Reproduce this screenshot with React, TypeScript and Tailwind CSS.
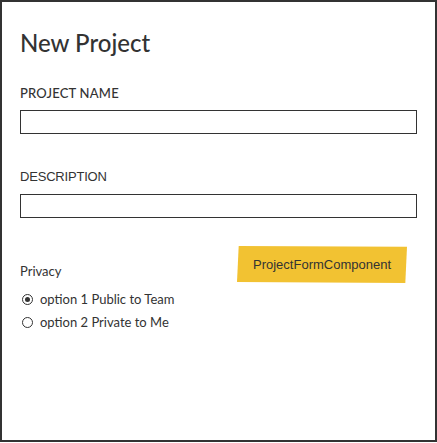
export default function App() {
  const font = { fontFamily: 'Lato, "Noto Sans", sans-serif' }
  return (
    <div className="w-[437px] h-[443px] bg-white">
      <div
        className="relative w-[437px] h-[442px] border-2 border-[#333] px-[18px] text-[#333]"
        style={font}
      >
        <h1 className="mt-[26px] text-[24px] leading-[30px] font-medium">New Project</h1>

        <label className="block mt-[27px] text-[13px] leading-[16px] font-medium tracking-[0.2px]">
          PROJECT NAME
        </label>
        <div className="mt-[9px] h-[24px] w-[397px] border-[1.5px] border-[#333]" />

        <label
          className="block mt-[35px] text-[13px] leading-[16px] tracking-[-0.2px]"
          style={{ fontFamily: '"Liberation Sans", Arial, sans-serif' }}
        >
          DESCRIPTION
        </label>
        <div className="mt-[9px] h-[24px] w-[397px] border-[1.5px] border-[#333]" />

        <div className="mt-[45px] text-[13px] leading-[16px]">Privacy</div>
        <div className="mt-[12px] flex flex-col gap-[7px] text-[13px] leading-[16px]">
          <div className="flex items-center gap-[7px] pl-[2px]">
            <span className="w-[11px] h-[11px] rounded-full border-[1.5px] border-[#333] flex items-center justify-center">
              <span className="w-[5px] h-[5px] rounded-full bg-[#333]" />
            </span>
            <span>option 1 Public to Team</span>
          </div>
          <div className="flex items-center gap-[7px] pl-[2px]">
            <span className="w-[11px] h-[11px] rounded-full border-[1.5px] border-[#333]" />
            <span>option 2 Private to Me</span>
          </div>
        </div>

        <div
          className="absolute left-[235px] top-[244px] w-[170px] h-[37px] bg-[#f2c232] flex items-center justify-center text-[13px] text-[#333]"
          style={{
            fontFamily: '"Liberation Sans", Arial, sans-serif',
            clipPath: 'polygon(1% 0%, 100% 2%, 99% 100%, 0% 97%)',
          }}
        >
          ProjectFormComponent
        </div>
      </div>
    </div>
  )
}
